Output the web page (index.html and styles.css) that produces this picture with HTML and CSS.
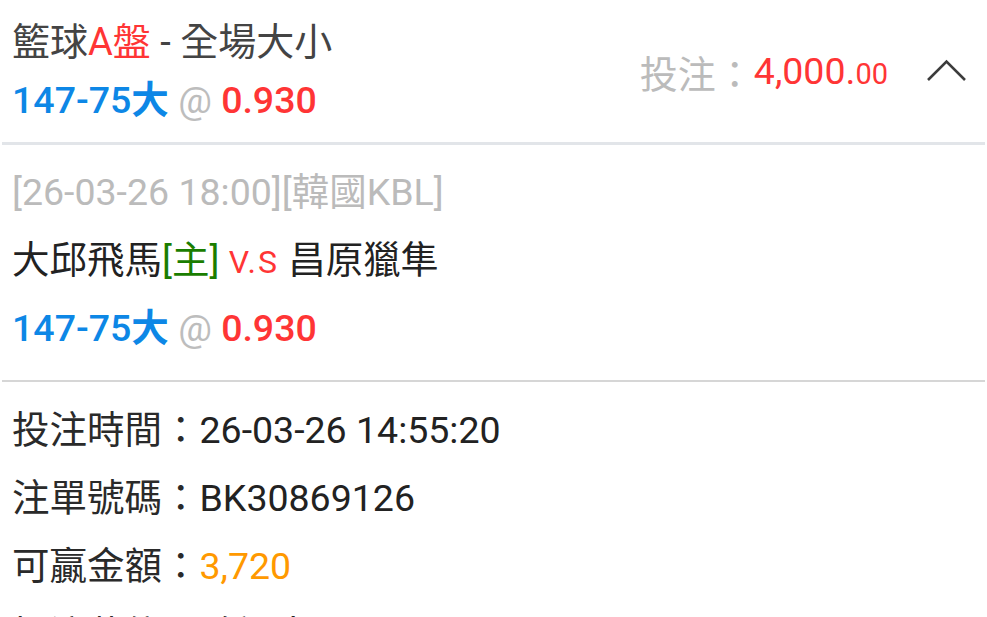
FILE: index.html
```html
<!DOCTYPE html>
<html lang="zh-Hant">
<head>
<meta charset="utf-8">
<title>注單詳情</title>
<link rel="stylesheet" href="styles.css">
</head>
<body>
<div class="ticket">
  <header class="head">
    <div class="head-main">
      <div class="line title">籃球<span class="red">A盤</span> - 全場大小</div>
      <div class="line pick"><span class="blue">147-75<b class="cjk-bold">大</b></span> <span class="at">@</span> <span class="odds">0.930</span></div>
    </div>
    <div class="head-side">
      <span class="stake-label">投注：</span><span class="stake">4,000.<span class="cents">00</span></span>
      <svg class="chevron" width="42" height="24" viewBox="0 0 42 24" aria-hidden="true">
        <polyline points="2,22 20.5,3.5 39,22" fill="none" stroke="#3c3c3c" stroke-width="2.6" stroke-linecap="butt" stroke-linejoin="miter"/>
      </svg>
    </div>
  </header>
  <div class="divider divider-top"></div>
  <section class="match">
    <div class="row meta">[26-03-26 18:00][韓國KBL]</div>
    <div class="row teams">大邱飛馬<span class="green">[主]</span> <span class="vs">V.S</span> 昌原獵隼</div>
    <div class="row pick"><span class="blue">147-75<b class="cjk-bold">大</b></span> <span class="at">@</span> <span class="odds">0.930</span></div>
  </section>
  <div class="divider divider-mid"></div>
  <section class="details">
    <div class="row"><span class="label">投注時間：</span><span class="value">26-03-26 14:55:20</span></div>
    <div class="row"><span class="label">注單號碼：</span><span class="value">BK30869126</span></div>
    <div class="row"><span class="label">可贏金額：</span><span class="value orange">3,720</span></div>
    <div class="row row-last"><span class="label">投注狀態：</span><span class="value red">確認中</span></div>
  </section>
</div>
</body>
</html>
```

FILE: styles.css
```css
html, body {
  margin: 0;
  padding: 0;
  background: #ffffff;
}

body {
  font-family: Roboto, "Noto Sans CJK TC", "Noto Sans CJK SC", sans-serif;
  font-size: 37.5px;
  color: #222222;
  overflow: hidden;
  height: 617px;
}

.ticket {
  width: 987px;
}

.head {
  display: flex;
  align-items: center;
  justify-content: space-between;
  padding: 13px 19px 13px 12px;
}

.line {
  height: 58px;
  line-height: 58px;
  white-space: nowrap;
}

.title {
  color: #444444;
  font-size: 38px;
}

.red {
  color: #ff3535;
}

.blue {
  color: #0d87e6;
  font-weight: 500;
}

.cjk-bold {
  font-weight: 700;
}

.at {
  color: #bdbdbd;
  font-weight: 400;
}

.odds {
  color: #ff3535;
  font-weight: 500;
}

.pick {
  font-size: 37.5px;
}

.head-side {
  display: flex;
  align-items: center;
  white-space: nowrap;
}

.stake-label {
  color: #bbbbbb;
  font-size: 38px;
}

.stake {
  color: #ff3535;
  font-size: 37.5px;
}

.cents {
  font-size: 29px;
}

.chevron {
  display: block;
  margin-left: 38px;
  margin-top: -2px;
}

.divider {
  margin: 0 2px;
}

.divider-top {
  height: 3px;
  background: #e2e5e9;
}

.divider-mid {
  height: 2px;
  background: #d6d6d6;
}

.match {
  padding: 13px 12px 18px;
}

.row {
  height: 68px;
  line-height: 68px;
  white-space: nowrap;
}

.meta {
  color: #bbbbbb;
  font-size: 37.5px;
}

.teams {
  color: #222222;
}

.green {
  color: #1a7d00;
}

.vs {
  color: #ff3535;
  font-size: 32px;
  letter-spacing: 2px;
}

.details {
  padding: 14px 12px 0;
}

.row-last {
  margin-top: 1px;
}

.label {
  color: #2a2a2a;
}

.value {
  color: #222222;
}

.orange {
  color: #ff9900;
}
```
